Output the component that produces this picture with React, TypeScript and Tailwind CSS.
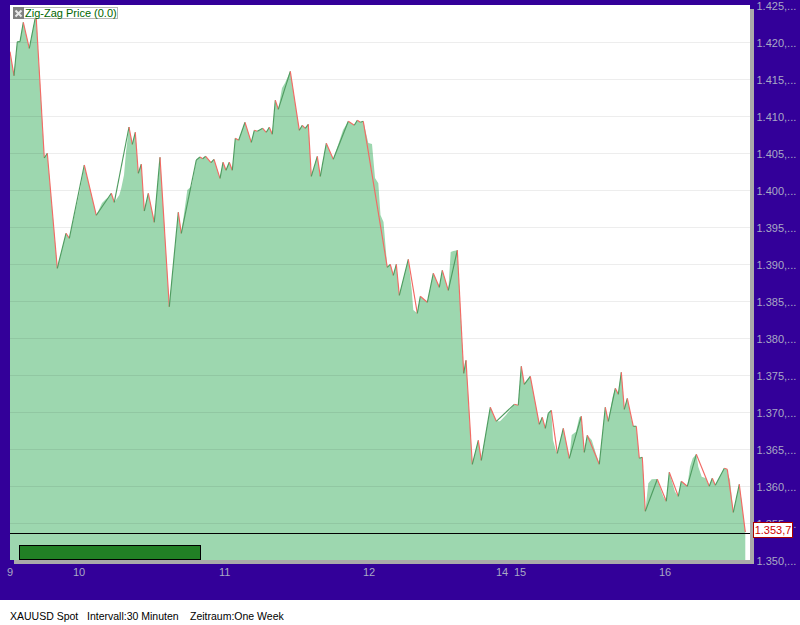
const zig: [number, number][] = [
  [10, 51.7], [14, 75.7], [17.3, 41.7], [20, 41.7], [23.3, 22.3], [29.3, 48.3], [36, 14], [44.3, 158], [47.3, 153.3],
  [57.3, 268.3], [66, 233.3], [69.3, 238.3], [84.3, 165], [96.3, 215.3], [111.3, 193.3], [114.3, 202.3], [129, 127],
  [132.3, 144.3], [135.3, 132.3], [138.3, 173.3], [141.3, 164.3], [144.3, 211], [148.3, 193.3], [154.3, 222.3],
  [160, 157.3], [169.3, 306.7], [178.3, 212.3], [181.3, 233.3], [196.3, 160], [200, 157], [202.7, 158.7], [205.7, 156.3],
  [211, 162.7], [214, 159.3], [220, 178.3], [223, 162.3], [226, 170.3], [229.3, 162.3], [232.3, 170.3], [235.3, 138.3],
  [238.7, 140.3], [245, 122.3], [251.3, 142.3], [254.3, 130.3], [257.3, 131.3], [262.7, 128.3], [266.3, 132.3],
  [269.3, 127.3], [272.3, 134.3], [275.3, 100.3], [278.3, 109.3], [290.3, 71.3], [299.3, 130.3], [302.3, 125.3],
  [305.3, 128.3], [308.3, 124.3], [311.3, 176.3], [317.3, 156.3], [320.3, 176.3], [326.3, 143.3], [333.3, 159.3],
  [348.3, 121.3], [354.3, 125.3], [357.3, 120.3], [360.3, 122.3], [363.3, 121.3], [387.3, 267.3], [390.3, 264.3],
  [393.3, 275.3], [396.3, 264.3], [399.3, 295.3], [408.3, 259.3], [417.3, 313.3], [420.3, 296.3], [427.3, 302.3],
  [433.3, 273.3], [439.3, 287.3], [442.3, 270.3], [448.3, 290.3], [457.3, 250.3], [463.7, 373.3], [466, 360.3],
  [472.3, 464.3], [478.3, 440.3], [481.3, 460.3], [490.3, 407.3], [496.3, 421.3], [514.3, 404.3], [518.3, 405.3],
  [521.3, 366.3], [524.3, 384.3], [530.3, 376.3], [539.3, 424.3], [542.3, 417.3], [545.3, 428.3], [548.3, 413.3],
  [551.3, 410.3], [557.3, 453.3], [563.3, 428.3], [569.3, 458.3], [581.3, 416.3], [584.3, 452.3], [587.3, 435.3],
  [599.3, 464.3], [605.3, 407.3], [608.3, 421.3], [615.3, 388.3], [618.3, 394.3], [621.3, 372.3], [624.3, 409.3],
  [627.3, 398.3], [633.3, 426.3], [636.3, 426.3], [639.3, 458.3], [642.3, 457.3], [645.3, 511.3], [657.3, 479.3],
  [666.3, 501.3], [669.3, 472.3], [678.3, 496.3], [681.3, 481.3], [687.3, 486.3], [696.3, 454.3], [709.3, 486.3],
  [712.3, 478.3], [715.3, 485.3], [724.3, 468.3], [727.3, 469.3], [733.3, 512.3], [739.3, 484.3], [745.3, 532],
];

const extras: [number, number][] = [
  [76, 208], [80, 190], [102, 203], [106, 199], [109, 197], [119.3, 195], [121.3, 188], [124, 175], [126, 152],
  [187.3, 190], [191.7, 186], [282, 88], [285, 83], [343, 130], [368.3, 143], [372, 144], [375, 178], [378.3, 183.3],
  [380.5, 215], [383.5, 222], [411.7, 290], [413.3, 310], [450.7, 252], [453.3, 251], [500, 421.3], [506, 415],
  [553, 440], [556, 451], [571.7, 435], [576, 431.7], [579.3, 417.3], [591.7, 440], [612.7, 396.7], [631.7, 420],
  [648.3, 483.3], [651.7, 479.3], [656.7, 479], [663.3, 496.7], [675, 491.7], [690, 466.7], [692.7, 458.3],
  [698.3, 466.7], [701.7, 476.7], [706, 478.3], [728.3, 475], [730, 480],
];

const area = [...zig, ...extras].sort((a, b) => a[0] - b[0]);
const areaPoints = `10,560 ${area.map((p) => p.join(",")).join(" ")} 745.3,560`;
const yLabels = ["1.425", "1.420", "1.415", "1.410", "1.405", "1.400", "1.395", "1.390", "1.385", "1.380", "1.375", "1.370", "1.365", "1.360", "1.355", "1.350"];
const gridYs = [42, 79, 116, 153, 190, 227, 264, 301, 338, 375, 412, 449, 486, 523];

export default function App() {
  return (
    <div className="w-[800px] h-[625px] bg-white flex flex-col font-['Liberation_Sans',Arial,sans-serif] text-[11px] leading-[13px]">
      <div className="h-[600px] bg-[#330099] flex flex-col">
        <div className="flex h-[566px]">
          <div className="pl-[10px] pt-[5px]">
            <div className="relative w-[740px] h-[555px] bg-white shadow-[4px_4px_0_#aaaaaa]">
              <svg className="block" width="740" height="555" viewBox="10 5 740 555">
                <polygon points={areaPoints} fill="#9dd7af" />
                {gridYs.map((y) => (
                  <line key={y} x1="10" x2="750" y1={y + 0.5} y2={y + 0.5} stroke="#000000" strokeOpacity="0.07" />
                ))}
                {zig.slice(1).map((p, i) => {
                  const prev = zig[i];
                  return (
                    <line
                      key={i}
                      x1={prev[0]}
                      y1={prev[1]}
                      x2={p[0]}
                      y2={p[1]}
                      stroke={p[1] > prev[1] ? "#f26a64" : "#4f9c60"}
                      strokeWidth="1.15"
                    />
                  );
                })}
                <line x1="10" x2="750" y1="533.5" y2="533.5" stroke="#000000" />
              </svg>
              <div className="absolute left-[3px] top-[2px] flex h-[12px]">
                <div className="w-[11px] h-[12px] bg-[#808080] flex items-center justify-center">
                  <svg width="9" height="9" viewBox="0 0 9 9">
                    <path d="M1.5 1.5 L7.5 7.5 M7.5 1.5 L1.5 7.5" stroke="#e8e8e8" strokeWidth="2" />
                  </svg>
                </div>
                <div className="w-[94px] h-[12px] bg-white border border-l-0 border-[#b8b8b8] text-[#006600] pl-[1px] leading-[11px] whitespace-nowrap">
                  Zig-Zag Price (0.0)
                </div>
              </div>
              <div className="absolute left-[9px] top-[540px] w-[182px] h-[15px] bg-[#218025] border border-black" />
              <div className="absolute left-[743px] top-[517px] w-[40px] h-[16px] bg-white border border-[#aa0000] text-[#cc0000] text-[11px] leading-[14px] text-center whitespace-nowrap">
                1.353,7
              </div>
            </div>
          </div>
          <div className="flex flex-col gap-[24px] pl-[6.5px] text-[#a9a9c4]">
            {yLabels.map((label) => (
              <span key={label} className="h-[13px] whitespace-nowrap">{label},...</span>
            ))}
          </div>
        </div>
        <div className="flex text-[#a9a9c4] h-[13px]">
          <span className="w-[73px] pl-[7px]">9</span>
          <span className="w-[146px]">10</span>
          <span className="w-[144px]">11</span>
          <span className="w-[133px]">12</span>
          <span className="w-[18px]">14</span>
          <span className="w-[145px]">15</span>
          <span>16</span>
        </div>
      </div>
      <div className="flex h-[25px] items-center pl-[10px] text-black text-[10.5px] whitespace-nowrap pt-[8px]">
        <span className="w-[77px]">XAUUSD Spot</span>
        <span className="w-[103px]">Intervall:30 Minuten</span>
        <span>Zeitraum:One Week</span>
      </div>
    </div>
  );
}
